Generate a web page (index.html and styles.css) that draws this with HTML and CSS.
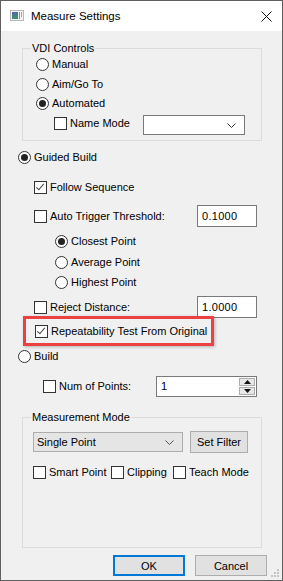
FILE: index.html
```html
<!DOCTYPE html>
<html><head>
<title>Measure Settings</title>
<link rel="stylesheet" href="styles.css">
</head><body>
<div class="window">
<div class="titlebar">
<svg class="appicon" width="14" height="11" viewBox="0 0 14 11">
<rect x="0.5" y="0.5" width="13" height="10" fill="#f4f4f4" stroke="#b8b8b8"/>
<rect x="2" y="2" width="6" height="7" fill="#3f8a7a"/>
<rect x="2" y="2" width="6" height="3" fill="#4a6fa0"/>
<rect x="9" y="2" width="1" height="7" fill="#7a8fb0"/>
<rect x="11" y="2" width="1" height="5" fill="#9aaac4"/>
</svg>
<span class="title">Measure Settings</span>
<svg class="close" width="11" height="11" viewBox="0 0 11 11">
<path d="M0.5 0.5 L10.5 10.5 M10.5 0.5 L0.5 10.5" stroke="#111" stroke-width="1"/>
</svg>
</div>
<div class="content">

<div class="group vdi">
<div class="legend">VDI Controls</div>
<div class="row r18"><span class="radio"></span><span>Manual</span></div>
<div class="row r18 mt2"><span class="radio"></span><span>Aim/Go To</span></div>
<div class="row r18 mt1"><span class="radio on"></span><span>Automated</span></div>
<div class="row namemode">
<span class="check"></span><span>Name Mode</span>
<div class="combo white"><svg class="chev" width="9" height="5" viewBox="0 0 9 5"><path d="M0.5 0.5 L4.5 4.5 L8.5 0.5" fill="none" stroke="#333"/></svg></div>
</div>
</div>

<div class="row r18 guided"><span class="radio on"></span><span>Guided Build</span></div>
<div class="row r18 follow"><span class="check on"></span><span>Follow Sequence</span></div>
<div class="row r22 trigger">
<span class="check"></span><span class="lbl">Auto Trigger Threshold:</span>
<div class="field">0.1000</div>
</div>
<div class="row r18 sub first"><span class="radio on"></span><span>Closest Point</span></div>
<div class="row r18 sub mt3"><span class="radio"></span><span>Average Point</span></div>
<div class="row r18 sub mt2"><span class="radio"></span><span>Highest Point</span></div>
<div class="row r22 reject">
<span class="check"></span><span class="lbl">Reject Distance:</span>
<div class="field">1.0000</div>
</div>
<div class="highlight">
<div class="row"><span class="check on"></span><span>Repeatability Test From Original</span></div>
</div>
<div class="row r18 build"><span class="radio"></span><span>Build</span></div>
<div class="row r22 numpts">
<span class="check"></span><span class="lbl">Num of Points:</span>
<div class="spin">
<span class="spintext">1</span>
<div class="spinbtns">
<div class="sbtn"><svg width="7" height="4" viewBox="0 0 7 4"><path d="M3.5 0 L7 4 L0 4 Z" fill="#111"/></svg></div>
<div class="sbtn"><svg width="7" height="4" viewBox="0 0 7 4"><path d="M0 0 L7 0 L3.5 4 Z" fill="#111"/></svg></div>
</div>
</div>
</div>

<div class="group mode">
<div class="legend">Measurement Mode</div>
<div class="row r22 moderow">
<div class="combo grey"><span>Single Point</span><svg class="chev" width="9" height="5" viewBox="0 0 9 5"><path d="M0.5 0.5 L4.5 4.5 L8.5 0.5" fill="none" stroke="#555"/></svg></div>
<div class="btn filter">Set Filter</div>
</div>
<div class="row r18 opts">
<div class="opt smart"><span class="check"></span><span>Smart Point</span></div>
<div class="opt clip"><span class="check"></span><span>Clipping</span></div>
<div class="opt"><span class="check"></span><span>Teach Mode</span></div>
</div>
</div>

<div class="buttons">
<div class="btn default">OK</div>
<div class="btn">Cancel</div>
</div>
</div>
<svg class="grip" width="9" height="9" viewBox="0 0 9 9">
<rect x="7" y="1" width="2" height="2" fill="#c4c4c4"/>
<rect x="4" y="4" width="2" height="2" fill="#c4c4c4"/>
<rect x="7" y="4" width="2" height="2" fill="#c4c4c4"/>
<rect x="1" y="7" width="2" height="2" fill="#c4c4c4"/>
<rect x="4" y="7" width="2" height="2" fill="#c4c4c4"/>
<rect x="7" y="7" width="2" height="2" fill="#c4c4c4"/>
</svg>
</div>
</body></html>
```
FILE: styles.css
```css
body {margin: 0; background: #fff; font-family: "Liberation Sans", Arial, sans-serif; font-size: 11px; color: #000;}
.window {position: relative; width: 283px; height: 581px; box-sizing: border-box; border: 1px solid #5f5f5f; background: #f0f0f0; display: flex; flex-direction: column;}
.titlebar {height: 30px; background: #fff; display: flex; align-items: center; flex-shrink: 0;}
.appicon {margin-left: 9px; margin-top: -1px;}
.title {margin-left: 7px; font-size: 11.5px; color: #000;}
.close {margin-left: auto; margin-right: 10px; margin-top: 1px;}
.content {padding: 17px 0 0 17px; display: flex; flex-direction: column;}

.group {margin-left: 4px; width: 240px; box-sizing: border-box; border: 1px solid #dcdcdc; display: flex; flex-direction: column;}
.legend {align-self: flex-start; height: 14px; line-height: 14px; margin-top: -8px; padding: 0 1px; background: #f0f0f0;}
.vdi {height: 93px; padding-left: 13px;}
.vdi .legend {margin-left: -5px;}
.mode {height: 131px; margin-top: 20px; padding-left: 10px;}
.mode .legend {margin-left: -2px;}

.row {display: flex; align-items: center; white-space: nowrap;}
.r18 {height: 18px;}
.r22 {height: 22px;}
.mt1 {margin-top: 1px;}
.mt2 {margin-top: 2px;}
.mt3 {margin-top: 3px;}

.radio {width: 13px; height: 13px; box-sizing: border-box; border: 1px solid #333; border-radius: 50%; background: #fff; margin-right: 3px; display: flex; align-items: center; justify-content: center; flex-shrink: 0;}
.radio.on::after {content: ""; width: 7px; height: 7px; border-radius: 50%; background: #222;}
.check {width: 13px; height: 13px; box-sizing: border-box; border: 1px solid #333; background: #fff; margin-right: 3px; flex-shrink: 0; position: relative;}
.check.on::after {content: ""; position: absolute; left: 3px; top: 0px; width: 3px; height: 7px; border: solid #444; border-width: 0 1.5px 1.5px 0; transform: rotate(40deg);}

.namemode {height: 20px; margin-top: 3px; padding-left: 18px; align-items: flex-start;}
.namemode .check {margin-top: 2px;}
.namemode span:nth-child(2) {margin-top: 2px;}
.combo {box-sizing: border-box; height: 20px; display: flex; align-items: center; position: relative;}
.combo .chev {margin-left: auto; margin-right: 8px;}
.combo.white {width: 102px; margin-left: auto; margin-right: 16px; background: #fff; border: 1px solid #7a7a7a;}
.combo.grey {width: 150px; background: #e5e5e5; border: 1px solid #adadad; padding-left: 3px;}

.guided {margin-top: 7px;}
.follow {margin-top: 12px; padding-left: 16px;}
.trigger {margin-top: 9px; padding-left: 16px;}
.reject {margin-top: 5px; padding-left: 16px;}
.lbl {flex: 1;}
.field {width: 60px; height: 22px; box-sizing: border-box; border: 1px solid #7a7a7a; background: #fff; margin-right: 25px; padding-left: 4px; line-height: 20px; letter-spacing: 0.3px;}
.sub {padding-left: 37px;}
.sub.first {margin-top: 5px;}

.highlight {margin: -2px 0 0 5px; width: 191px; height: 30px; box-sizing: border-box; border: 3px solid #eb4141; box-shadow: 1px 1px 3px rgba(0,0,0,0.25); display: flex; align-items: center; padding-left: 9px;}
.build {margin-top: 1px;}
.numpts {margin-top: 10px; padding-left: 25px;}
.spin {width: 101px; height: 21px; box-sizing: border-box; border: 1px solid #7a7a7a; background: #fff; margin-right: 25px; display: flex; align-items: center;}
.spintext {flex: 1; padding-left: 4px;}
.spinbtns {display: flex; flex-direction: column; gap: 1px; margin-right: 1px;}
.sbtn {width: 16px; height: 8px; box-sizing: border-box; border: 1px solid #adadad; background: #e8e8e8; display: flex; align-items: center; justify-content: center;}

.moderow {margin-top: 7px;}
.btn {box-sizing: border-box; height: 21px; width: 72px; background: #e1e1e1; border: 1px solid #adadad; display: flex; align-items: center; justify-content: center;}
.filter {width: 58px; height: 22px; margin-left: 7px;}
.opts {margin-top: 10px;}
.opt {display: flex; align-items: center;}
.smart {width: 78px;}
.clip {width: 62px;}

.buttons {display: flex; justify-content: flex-end; gap: 10px; margin-top: 7px; padding-right: 15px;}
.btn.default {border: 2px solid #0078d7;}
.grip {position: absolute; right: 3px; bottom: 3px;}
```
